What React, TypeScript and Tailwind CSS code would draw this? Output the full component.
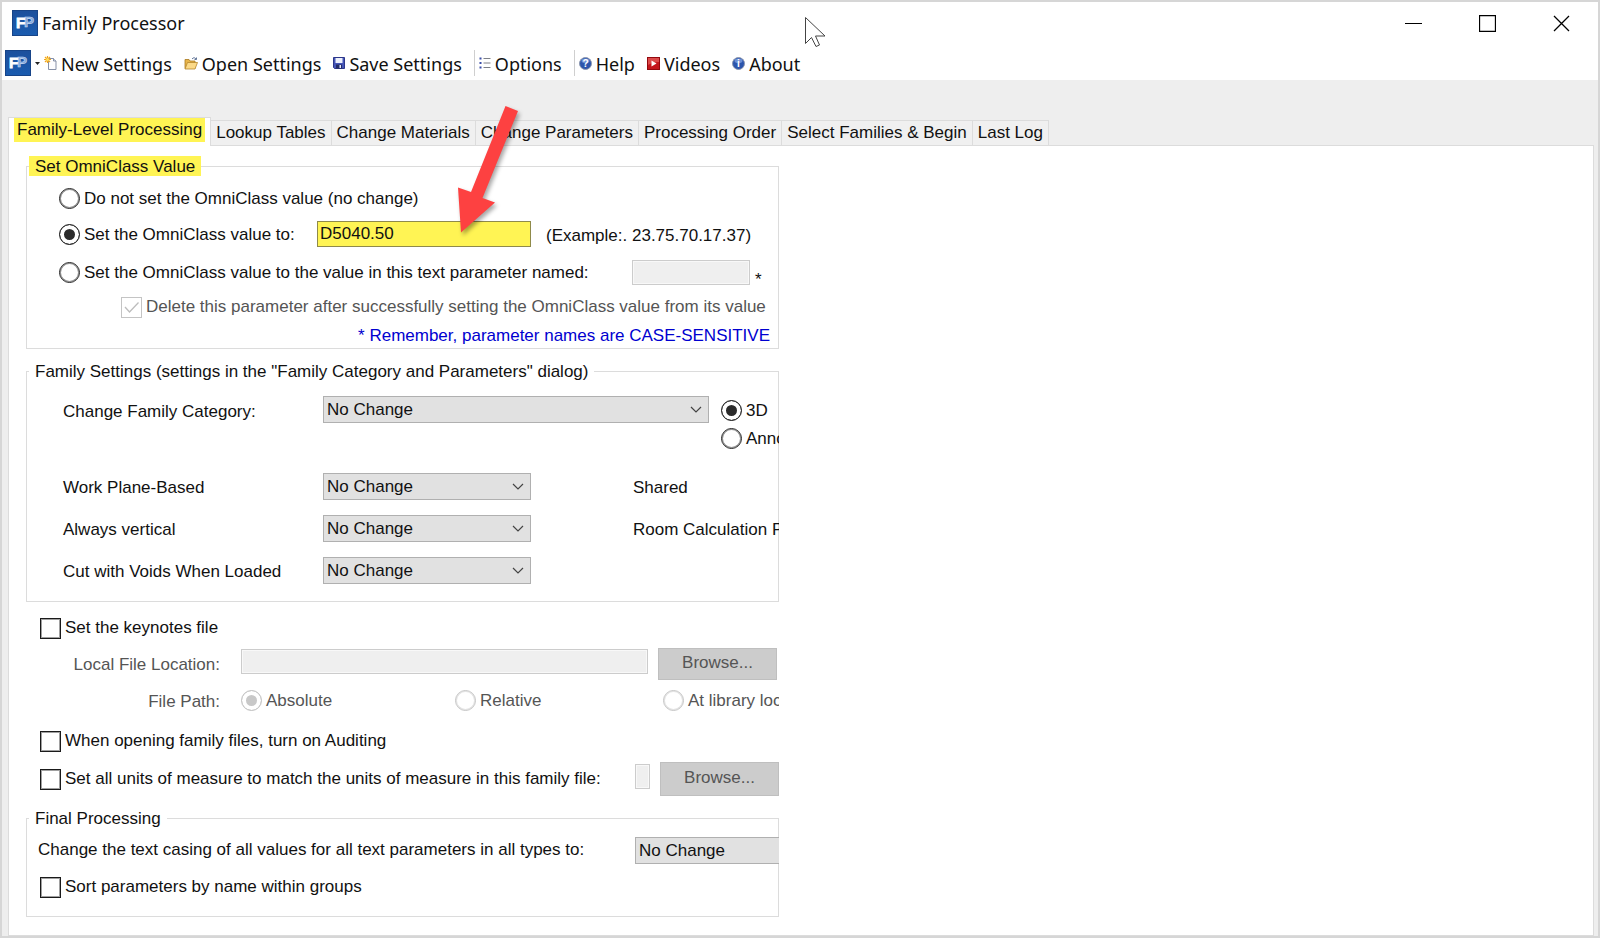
import type { ReactNode } from 'react'

const TABS = [
  'Lookup Tables',
  'Change Materials',
  'Change Parameters',
  'Processing Order',
  'Select Families & Begin',
  'Last Log',
]

const RADIO =
  'appearance-none size-[21px] shrink-0 rounded-full border border-[#222] bg-white shadow-[inset_0_0_0_1px_#8c8c8c] checked:bg-[#2b2b2b] checked:shadow-[inset_0_0_0_4px_#fff] disabled:border-[#c4c4c4] disabled:shadow-[inset_0_0_0_1px_#e2e2e2] disabled:checked:bg-[#c8c8c8] disabled:checked:shadow-[inset_0_0_0_4px_#fff]'

const CHECKBOX =
  'appearance-none size-[21px] shrink-0 border border-[#1a1a1a] bg-white shadow-[inset_0_0_0_1px_#a0a0a0] disabled:border-[#c4c4c4] disabled:shadow-none'

const DISABLED_INPUT = 'h-[25px] shrink-0 border border-[#ccc] bg-[#efefef] shadow-[inset_0_0_0_1px_#f8f8f8]'

const BROWSE = 'w-[119px] shrink-0 border border-[#bfbfbf] bg-[#ccc] pb-[2px] text-[#555]'

const Logo = () => (
  <svg viewBox="0 0 26 26" className="size-[26px] shrink-0">
    <defs>
      <linearGradient id="fp-blue" x1="0" y1="0" x2="0" y2="1">
        <stop offset="0" stopColor="#1c4f9c" />
        <stop offset="1" stopColor="#1a5cb0" />
      </linearGradient>
    </defs>
    <rect width="26" height="26" fill="url(#fp-blue)" />
    <rect x="0.5" y="0.5" width="25" height="25" fill="none" stroke="#174488" />
    <g fontFamily="Liberation Sans, sans-serif" fontWeight="700" fontSize="15">
      <text x="12" y="17" fill="#7fa6dc" stroke="#c6d9f2" strokeWidth="0.6">P</text>
      <text x="4" y="18" fill="#fff" stroke="#fff" strokeWidth="0.8">F</text>
    </g>
  </svg>
)

const NewIcon = () => (
  <svg viewBox="0 0 13 14" className="h-[14px] w-[13px]">
    <path d="M4.5 2.5h5l2.5 2.5v8.5h-7.500z" fill="#fdfdff" stroke="#8791a8" />
    <path d="M9.500 2.500v2.500h2.500" fill="#dde3ef" stroke="#6f7b96" strokeWidth="0.8" />
    <path d="M3.500 0v7M0 3.500h7M1 1l5 5M6 1l-5 5" stroke="#f2a51c" strokeWidth="1.200" />
    <circle cx="3.500" cy="3.500" r="1.500" fill="#ffdf5e" />
  </svg>
)

const OpenIcon = () => (
  <svg viewBox="0 0 14 13" className="h-[13px] w-[14px]">
    <path d="M1 11.500v-9h4l1 1.500h5v7.500z" fill="#e8b54a" stroke="#a87820" strokeWidth="0.8" />
    <path d="M1 12l2.500-6.500h10l-2.500 6.500z" fill="#fbd987" stroke="#b5872c" strokeWidth="0.8" />
    <path d="M8 2c1.500-1.800 3-1.500 4 0M12.500 0.500v2h-2" fill="none" stroke="#54698f" strokeWidth="0.9" />
  </svg>
)

const SaveIcon = () => (
  <svg viewBox="0 0 12 12" className="size-3">
    <path d="M0.500 0.500h11v11h-10l-1-1z" fill="#4656b8" stroke="#2c378a" />
    <rect x="2.500" y="1" width="7" height="5" fill="#eef1fb" />
    <rect x="3" y="7.500" width="6" height="4" fill="#232c66" />
    <rect x="6.500" y="8" width="1.500" height="3" fill="#e6e9f6" />
  </svg>
)

const OptionsIcon = () => (
  <svg viewBox="0 0 12 12" className="size-3">
    <path d="M4.500 1.500h7M4.500 6h7M4.500 10.500h7" stroke="#7c7f86" />
    <path d="M0.500 1.500h2M0.500 6h2M0.500 10.500h2" stroke="#3b4ea8" strokeWidth="2" />
  </svg>
)

const BallIcon = ({ glyph }: { glyph: string }) => (
  <svg viewBox="0 0 13 13" className="size-[13px]">
    <circle cx="6.500" cy="6.500" r="6" fill="#2c55ac" stroke="#8a95ad" />
    <ellipse cx="6.500" cy="3.800" rx="4" ry="2.400" fill="#6c8fd4" />
    <text x="6.500" y="10" textAnchor="middle" fontSize="10" fontWeight="700" fontFamily="Liberation Sans, sans-serif" fill="#fff">
      {glyph}
    </text>
  </svg>
)

const VideosIcon = () => (
  <svg viewBox="0 0 13 13" className="size-[13px]">
    <rect x="0.500" y="0.500" width="12" height="12" fill="#c4161c" stroke="#93090e" />
    <path d="M1 1h11v4c-4 0-8 1-11 3z" fill="#dc4a4a" />
    <path d="M4.500 3.500l5 3-5 3z" fill="#fff" />
  </svg>
)

const ToolButton = ({ icon, children }: { icon: ReactNode; children: ReactNode }) => (
  <button className="flex items-center gap-1 pr-3 whitespace-nowrap">
    {icon}
    <span className="pt-[2px]">{children}</span>
  </button>
)

const Check = ({ children }: { children: ReactNode }) => (
  <label className="flex items-center gap-1">
    <input type="checkbox" className={CHECKBOX} />
    <span>{children}</span>
  </label>
)

interface RadioProps {
  name: string
  checked?: boolean
  disabled?: boolean
  className?: string
  children: ReactNode
}

const Radio = ({ name, checked, disabled, className = '', children }: RadioProps) => (
  <label className={`flex shrink-0 items-center gap-1 ${className}`}>
    <input type="radio" name={name} defaultChecked={checked} disabled={disabled} className={RADIO} />
    <span className="pt-[2px]">{children}</span>
  </label>
)

interface DropProps {
  label: string
  width: string
}

const Drop = ({ label, width }: DropProps) => (
  <div className={`relative shrink-0 ${width}`}>
    <select aria-label={label} className="block h-[27px] w-full appearance-none border border-[#b0b0b0] bg-[#e1e1e1] pt-px pl-[3px]">
      <option>No Change</option>
    </select>
    <svg viewBox="0 0 12 7" className="pointer-events-none absolute top-[10px] right-[7px] h-[7px] w-3">
      <path d="M1 1l5 5 5-5" fill="none" stroke="#444" strokeWidth="1.200" />
    </svg>
  </div>
)

interface GroupProps {
  title: string
  highlight?: boolean
  className?: string
  children: ReactNode
}

const Group = ({ title, highlight, className = '', children }: GroupProps) => (
  <fieldset className={`min-w-0 border border-[#dcdcdc] ${className}`}>
    <legend className={`ml-[2px] h-5 px-[6px] leading-[22px] ${highlight ? 'bg-[#fff454]' : ''}`}>{title}</legend>
    {children}
  </fieldset>
)

function TitleBar() {
  return (
    <header className="flex h-12 items-center justify-between pb-[6px] pl-[10px] font-['Noto_Sans',sans-serif] text-lg">
      <div className="flex items-center gap-1">
        <Logo />
        <h1>Family Processor</h1>
      </div>
      <div className="flex h-full">
        <button aria-label="Minimize" className="flex w-[74px] items-center justify-center">
          <svg viewBox="0 0 17 17" className="size-[17px]"><path d="M0 8.500h17" stroke="#000" /></svg>
        </button>
        <button aria-label="Maximize" className="flex w-[74px] items-center justify-center">
          <svg viewBox="0 0 17 17" className="size-[17px]"><path d="M0.500 0.500h16v16h-16z" fill="none" stroke="#000" strokeWidth="1.300" /></svg>
        </button>
        <button aria-label="Close" className="flex w-[74px] items-center justify-center">
          <svg viewBox="0 0 17 17" className="size-[17px]"><path d="M1 1l15 15M16 1l-15 15" stroke="#000" strokeWidth="1.300" /></svg>
        </button>
      </div>
    </header>
  )
}

function Toolbar() {
  return (
    <nav className="flex h-[30px] items-center pb-1 pl-[3px] font-['Noto_Sans',sans-serif] text-lg">
      <button aria-label="Menu" className="mr-1 flex items-center gap-1">
        <Logo />
        <svg viewBox="0 0 5 3" className="h-[3px] w-[5px]"><path d="M0 0h5l-2.500 3z" fill="#222" /></svg>
      </button>
      <ToolButton icon={<NewIcon />}>New Settings</ToolButton>
      <ToolButton icon={<OpenIcon />}>Open Settings</ToolButton>
      <ToolButton icon={<SaveIcon />}>Save Settings</ToolButton>
      <span className="mr-1 h-[26px] w-px bg-[#cfcfcf]" />
      <ToolButton icon={<OptionsIcon />}>Options</ToolButton>
      <span className="mr-1 h-[26px] w-px bg-[#cfcfcf]" />
      <ToolButton icon={<BallIcon glyph="?" />}>Help</ToolButton>
      <ToolButton icon={<VideosIcon />}>Videos</ToolButton>
      <ToolButton icon={<BallIcon glyph="i" />}>About</ToolButton>
    </nav>
  )
}

function OmniClassGroup() {
  return (
    <Group title="Set OmniClass Value" highlight>
      <div className="flex h-10 items-center pt-1 pl-8">
        <Radio name="omni">Do not set the OmniClass value (no change)</Radio>
      </div>
      <div className="flex h-9 items-center pl-8">
        <Radio name="omni" checked className="w-[258px]">Set the OmniClass value to:</Radio>
        <input aria-label="OmniClass value" defaultValue="D5040.50" className="h-[26px] w-[214px] shrink-0 border border-[#8f8a4a] bg-[#fff454] px-[2px]" />
        <span className="pt-1 pl-[15px]">(Example:. 23.75.70.17.37)</span>
      </div>
      <div className="flex h-10 items-center pl-8">
        <Radio name="omni" className="w-[573px]">
          Set the OmniClass value to the value in this text parameter named:
        </Radio>
        <input aria-label="Text parameter name" disabled className={`w-[118px] ${DISABLED_INPUT}`} />
        <span className="pt-4 pl-[5px]">*</span>
      </div>
      <div className="flex h-[30px] items-center pl-[94px]">
        <label className="flex items-center gap-1 text-[#555]">
          <span className="relative flex">
            <input type="checkbox" disabled defaultChecked className={CHECKBOX} />
            <svg viewBox="0 0 21 21" className="pointer-events-none absolute inset-0">
              <path d="M4 10l4.500 5 9-9.500" fill="none" stroke="#bdbdbd" strokeWidth="1.300" />
            </svg>
          </span>
          Delete this parameter after successfully setting the OmniClass value from its value
        </label>
      </div>
      <p className="h-[26px] pr-2 text-right leading-7 text-[#0000d0]">* Remember, parameter names are CASE-SENSITIVE</p>
    </Group>
  )
}

function FamilySettingsGroup() {
  const rows = [
    { label: 'Work Plane-Based', right: 'Shared' },
    { label: 'Always vertical', right: 'Room Calculation Point' },
    { label: 'Cut with Voids When Loaded', right: '' },
  ]

  return (
    <Group title={'Family Settings (settings in the "Family Category and Parameters" dialog)'} className="mt-3 pb-[10px]">
      <div className="flex h-[84px] items-start pt-[15px] pl-9">
        <span className="w-[260px] shrink-0 pt-1 leading-6">Change Family Category:</span>
        <Drop label="Change Family Category" width="w-[386px]" />
        <div className="pl-3">
          <Radio name="kind" checked className="h-7">3D</Radio>
          <Radio name="kind" className="h-7">Annotation</Radio>
        </div>
      </div>
      {rows.map((row) => (
        <div key={row.label} className="flex h-[42px] items-center pl-9">
          <span className="w-[260px] shrink-0 pt-1">{row.label}</span>
          <Drop label={row.label} width="w-[208px]" />
          <span className="pt-1 pl-[102px]">{row.right}</span>
        </div>
      ))}
    </Group>
  )
}

function FileOptions() {
  return (
    <section className="pt-[14px] pl-[14px]">
      <div className="flex h-6 items-center">
        <Check>Set the keynotes file</Check>
      </div>
      <div className="mt-2 flex h-8 items-stretch text-[#555]">
        <label htmlFor="keynotes" className="w-[180px] shrink-0 self-center pt-px text-right">Local File Location:</label>
        <input id="keynotes" disabled className={`mt-px ml-[21px] w-[407px] ${DISABLED_INPUT}`} />
        <button disabled className={`ml-[10px] ${BROWSE}`}>Browse...</button>
      </div>
      <div className="flex h-10 items-center text-[#555]">
        <span className="w-[180px] shrink-0 pt-1 text-right">File Path:</span>
        <Radio name="path" checked disabled className="ml-[21px] w-[214px]">Absolute</Radio>
        <Radio name="path" disabled className="w-[208px]">Relative</Radio>
        <Radio name="path" disabled>At library location</Radio>
      </div>
      <div className="flex h-[42px] items-center">
        <Check>When opening family files, turn on Auditing</Check>
      </div>
      <div className="flex h-[34px] items-stretch">
        <div className="flex w-[595px] shrink-0 items-center">
          <Check>Set all units of measure to match the units of measure in this family file:</Check>
        </div>
        <input aria-label="Units family file" disabled className={`mt-[2px] w-[15px] ${DISABLED_INPUT}`} />
        <button disabled className={`ml-[10px] ${BROWSE}`}>Browse...</button>
      </div>
    </section>
  )
}

function FinalProcessingGroup() {
  return (
    <Group title="Final Processing" className="mt-3 pb-[14px]">
      <div className="flex h-11 items-center pl-[11px]">
        <span className="w-[597px] shrink-0">Change the text casing of all values for all text parameters in all types to:</span>
        <Drop label="Text casing" width="w-[208px]" />
      </div>
      <div className="flex h-[30px] items-center pl-[13px]">
        <Check>Sort parameters by name within groups</Check>
      </div>
    </Group>
  )
}

export default function App() {
  return (
    <div className="relative flex min-h-screen flex-col border-2 border-[#d6d6d6] bg-[#eee] font-['Liberation_Sans',Arial,sans-serif] text-[17px] leading-5 text-[#111]">
      <div className="bg-white">
        <TitleBar />
        <Toolbar />
      </div>

      <div className="mt-[37px] flex items-end pl-[6px] whitespace-nowrap">
        <button className="relative z-10 -mb-px h-[29px] border border-b-0 border-[#dcdcdc] bg-white px-[5px] pb-1">
          <span className="block h-6 bg-[#fff454] px-[3px] leading-6">Family-Level Processing</span>
        </button>
        {TABS.map((tab) => (
          <button key={tab} className="h-[25px] border-t border-r border-[#dcdcdc] bg-[#f0f0f0] px-[5px]">
            {tab}
          </button>
        ))}
      </div>

      <main className="mr-1 ml-[6px] grow border border-[#dcdcdc] bg-white pt-[10px] pb-4 pl-[17px]">
        <div className="max-w-[753px] overflow-hidden whitespace-nowrap">
          <OmniClassGroup />
          <FamilySettingsGroup />
          <FileOptions />
          <FinalProcessingGroup />
        </div>
      </main>

      {/* callout arrow and mouse pointer float over the window */}
      <svg viewBox="0 0 90 140" className="pointer-events-none absolute top-[98px] left-[448px] h-[140px] w-[90px] drop-shadow-[2px_3px_2px_rgba(0,0,0,0.35)]">
        <path d="M55.500 6L68 11 32.500 98 45 102.500 11 132.500 8 87.500 21 92z" fill="#fd4141" />
      </svg>
      <svg viewBox="0 0 22 32" className="pointer-events-none absolute top-[15px] left-[803px] h-8 w-[22px]">
        <path d="M0.500 0.500v26l6-6 4.500 9 3.500-1.500-4-9h9.500z" fill="#fff" stroke="#444" />
      </svg>
    </div>
  )
}
